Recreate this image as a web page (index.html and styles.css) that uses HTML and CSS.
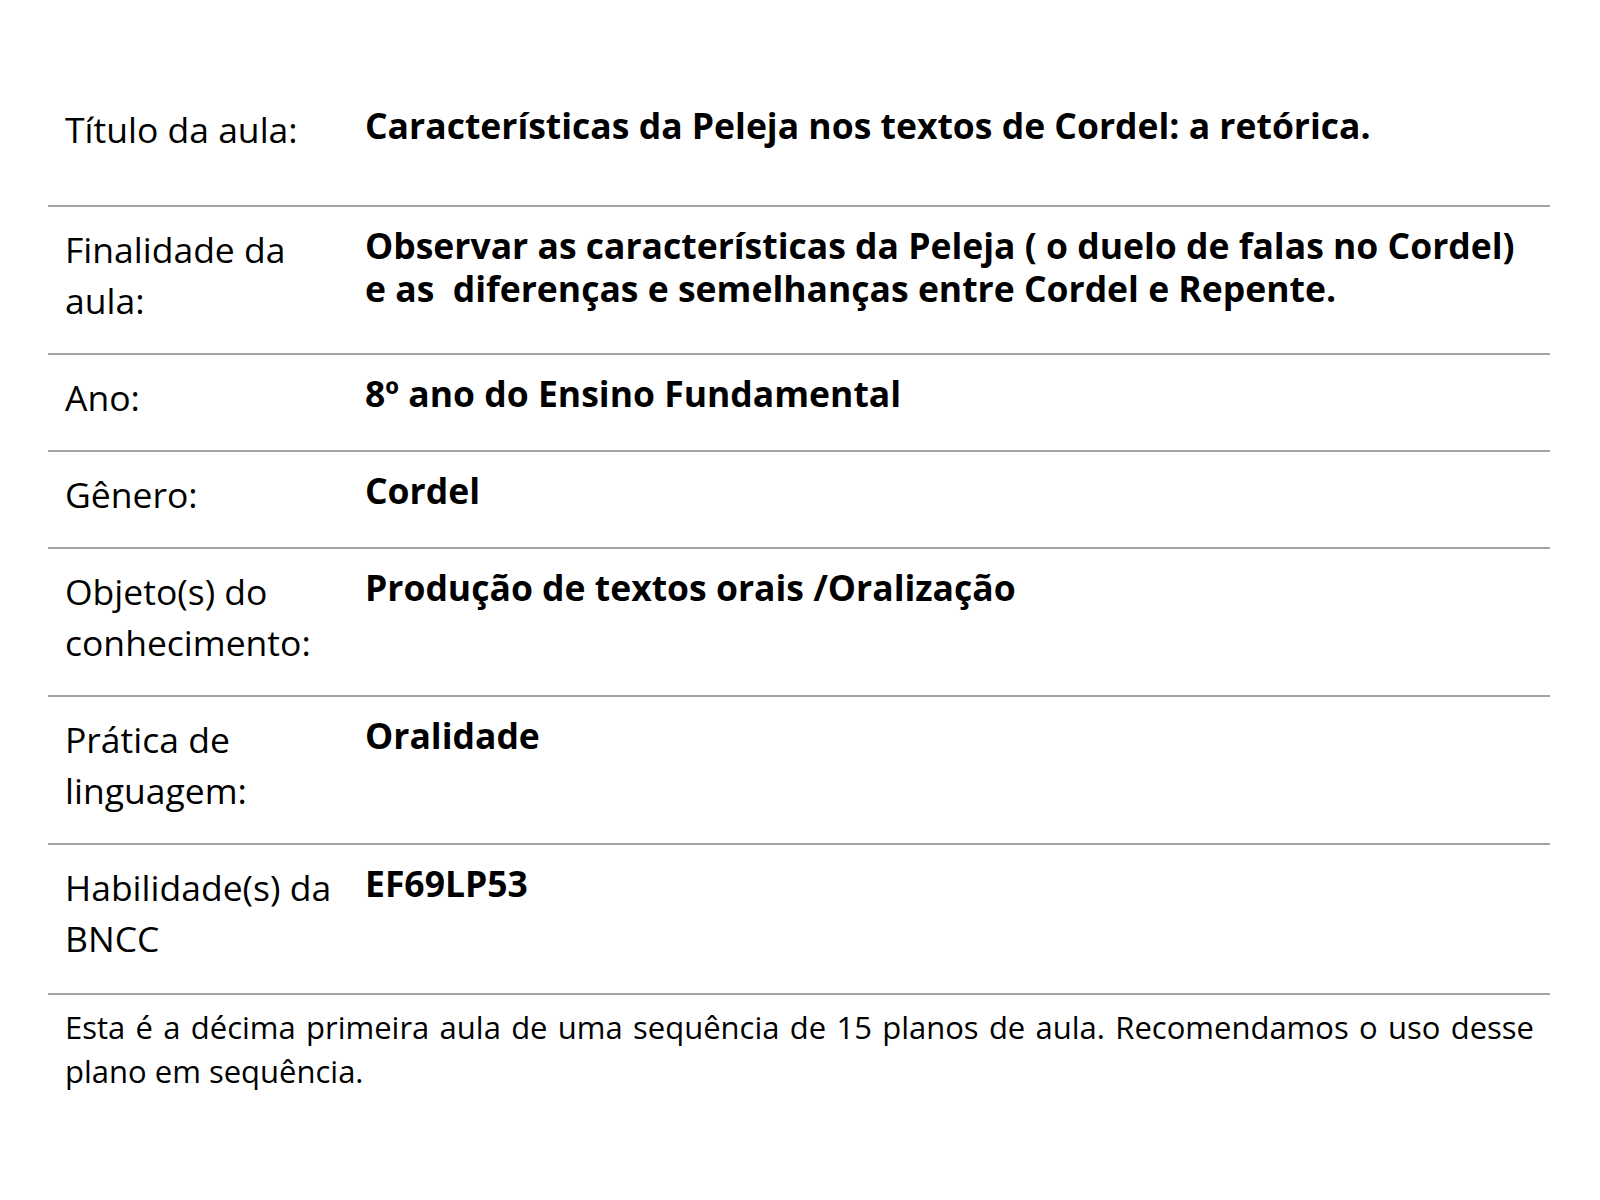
FILE: index.html
```html
<!DOCTYPE html>
<html lang="pt-BR">
<head>
<meta charset="utf-8">
<title>Plano de aula</title>
<link rel="stylesheet" href="styles.css">
</head>
<body>
<main class="plan">
  <div class="row row-first">
    <div class="label">Título da aula:</div>
    <div class="value">Características da Peleja nos textos de Cordel: a retórica.</div>
  </div>
  <div class="row">
    <div class="label">Finalidade da aula:</div>
    <div class="value">Observar as características da Peleja ( o duelo de falas no Cordel) e as&nbsp; diferenças e semelhanças entre Cordel e Repente.</div>
  </div>
  <div class="row">
    <div class="label">Ano:</div>
    <div class="value">8º ano do Ensino Fundamental</div>
  </div>
  <div class="row">
    <div class="label">Gênero:</div>
    <div class="value">Cordel</div>
  </div>
  <div class="row">
    <div class="label">Objeto(s) do conhecimento:</div>
    <div class="value">Produção de textos orais /Oralização</div>
  </div>
  <div class="row">
    <div class="label">Prática de linguagem:</div>
    <div class="value">Oralidade</div>
  </div>
  <div class="row row-last">
    <div class="label">Habilidade(s) da BNCC</div>
    <div class="value">EF69LP53</div>
  </div>
  <p class="note">Esta é a décima primeira aula de uma sequência de 15 planos de aula. Recomendamos o uso desse plano em sequência.</p>
</main>
</body>
</html>
```

FILE: styles.css
```css
html, body {
  margin: 0;
  padding: 0;
  background: #ffffff;
}

body {
  font-family: "Open Sans", "Noto Sans", "Liberation Sans", sans-serif;
  color: #000000;
}

.plan {
  margin-left: 48px;
  width: 1502px;
  padding-top: 87px;
}

.row {
  display: grid;
  grid-template-columns: 300px 1fr;
  padding: 17px 16px 27px 17px;
  border-bottom: 2px solid #a3a3a3;
}

.row-first {
  padding-bottom: 50px;
}

.row-last {
  padding-bottom: 29px;
}

.label {
  font-size: 35.5px;
  line-height: 51px;
  font-weight: 400;
  padding-right: 10px;
}

.value {
  font-size: 35.5px;
  line-height: 43px;
  font-weight: 700;
}

.note {
  margin: 0;
  padding: 10px 16px 0 17px;
  font-size: 31px;
  line-height: 44px;
  text-align: justify;
}
```
